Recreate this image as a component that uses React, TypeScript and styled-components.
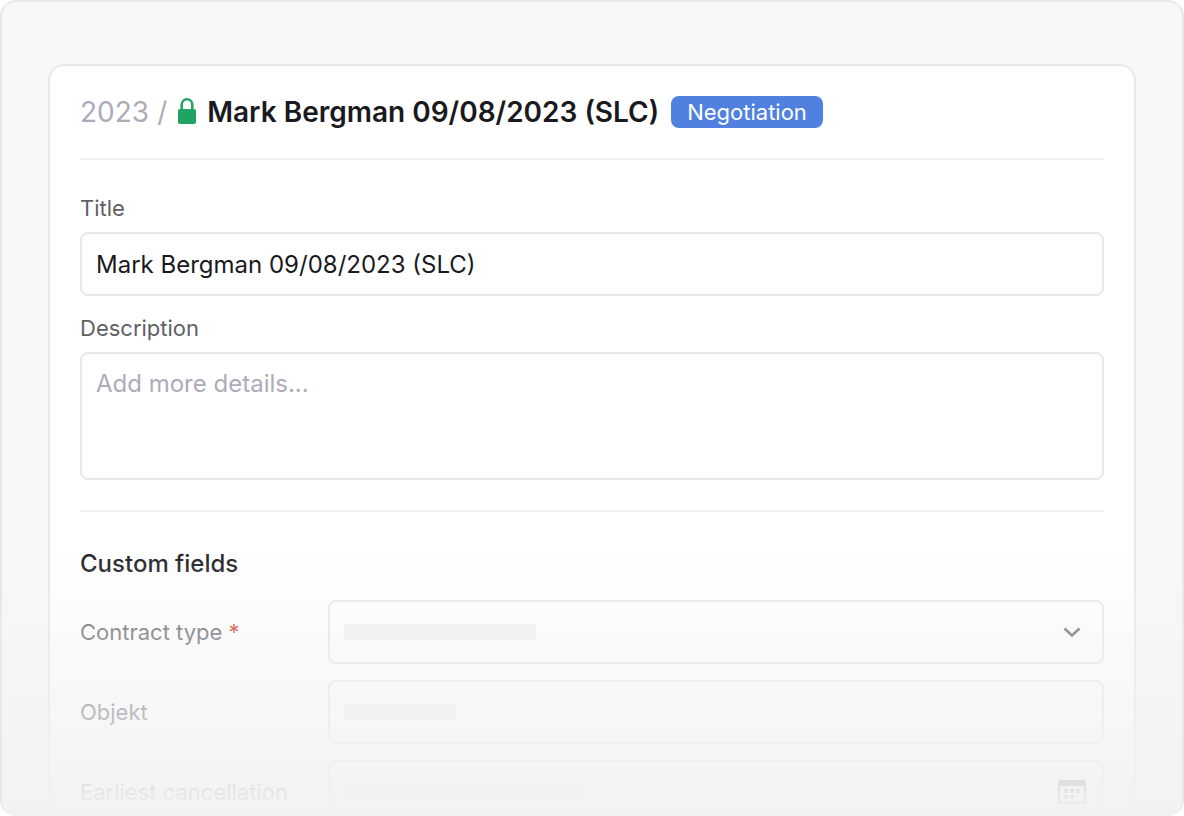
import React from "react";
import styled, { createGlobalStyle } from "styled-components";

const GlobalStyle = createGlobalStyle`
  *, *::before, *::after { box-sizing: border-box; }
  body {
    margin: 0;
    background: #ffffff;
    font-family: Inter, "Liberation Sans", sans-serif;
  }
`;

const Panel = styled.main`
  position: relative;
  display: flex;
  height: 100vh;
  padding: 62px 46px 12px;
  overflow: hidden;
  background: #f7f8fa;
  border: 2px solid #e8e8ea;
  border-bottom: 0;
  border-radius: 16px;
`;

const Card = styled.form`
  flex: 1;
  min-width: 0;
  padding: 0 30px;
  overflow: hidden;
  background: #ffffff;
  border: 2px solid #e8e8ea;
  border-bottom: 0;
  border-radius: 16px 16px 0 0;
`;

const Fade = styled.div`
  position: absolute;
  inset: auto -2px 0;
  height: 280px;
  pointer-events: none;
  background: linear-gradient(rgba(242, 242, 244, 0), #f2f2f4);
`;

const Header = styled.header`
  display: flex;
  align-items: center;
  height: 94px;
  border-bottom: 2px solid #f2f2f4;
  font-size: 28px;
  line-height: 40px;
  white-space: nowrap;
`;

const Crumb = styled.a`
  color: #adabba;
  text-decoration: none;
`;

const Slash = styled.span`
  margin: 0 10px 0 8px;
  color: #adabba;
`;

const PageTitle = styled.h1`
  margin: 0 12px 0 10px;
  color: #1a1a1e;
  font-size: 28px;
  font-weight: 600;
`;

const Badge = styled.span`
  padding: 0 16px;
  color: #ffffff;
  background: #5081e0;
  border-radius: 8px;
  font-size: 22px;
  line-height: 32px;
`;

const Section = styled.section`
  display: flex;
  flex-direction: column;
  padding: 32px 0 30px;
  border-bottom: 2px solid #f2f2f4;
`;

const CustomSection = styled.section`
  display: flex;
  flex-direction: column;
  gap: 16px;
  padding: 32px 0 0;
`;

const Label = styled.label`
  color: #5f5f66;
  font-size: 22px;
  line-height: 32px;
`;

const Required = styled.span`
  color: #c9301c;
`;

const fieldStyle = `
  display: block;
  width: 100%;
  margin: 0;
  color: #1a1a1e;
  background: transparent;
  border: 2px solid #e8e8ea;
  border-radius: 8px;
  outline: none;
  font-family: inherit;
  font-size: 24px;
`;

const TextInput = styled.input`
  ${fieldStyle}
  height: 64px;
  padding: 0 14px;
`;

const TitleInput = styled(TextInput)`
  margin: 8px 0 16px;
`;

const TextArea = styled.textarea`
  ${fieldStyle}
  height: 128px;
  margin-top: 8px;
  padding: 14px;
  line-height: 32px;
  resize: none;
  &::placeholder { color: #adabba; opacity: 1; }
`;

const Select = styled.select`
  ${fieldStyle}
  height: 64px;
  padding: 0 14px;
  appearance: none;
`;

const SectionTitle = styled.h2`
  margin: 0;
  color: #1a1a1e;
  font-size: 24px;
  font-weight: 500;
  line-height: 40px;
`;

const Row = styled.div`
  display: grid;
  grid-template-columns: 232px 1fr;
  column-gap: 16px;
  align-items: center;
`;

const Control = styled.div`
  position: relative;
`;

const Skeleton = styled.span<{ $width: number }>`
  position: absolute;
  top: 24px;
  left: 16px;
  width: ${(p) => p.$width}px;
  height: 16px;
  background: #f2f2f4;
  border-radius: 4px;
  pointer-events: none;
`;

const ControlIcon = styled.svg`
  position: absolute;
  top: 16px;
  right: 16px;
  width: 32px;
  height: 32px;
  pointer-events: none;
`;

const LockIcon = () => (
  <svg width="20" height="28" viewBox="0 0 20 28" aria-hidden="true">
    <path d="M4.700 12V6.600a5.300 5.300 0 0 1 10.600 0V12" fill="none" stroke="#20a464" strokeWidth="2.600" />
    <rect x="1" y="11" width="18" height="15" rx="2" fill="#20a464" />
  </svg>
);

const Chevron = () => (
  <ControlIcon viewBox="0 0 32 32" aria-hidden="true">
    <path d="M8.500 12.500 16 19.500l7.500-7" fill="none" stroke="#5f5f66" strokeWidth="2.400" />
  </ControlIcon>
);

const CalendarIcon = () => (
  <ControlIcon viewBox="0 0 32 32" aria-hidden="true">
    <path
      fill="#5f5f66"
      fillRule="evenodd"
      d="M4 4h24a2 2 0 0 1 2 2v20a2 2 0 0 1-2 2H4a2 2 0 0 1-2-2V6a2 2 0 0 1 2-2Zm1 6a1 1 0 0 0-1 1v14a1 1 0 0 0 1 1h22a1 1 0 0 0 1-1V11a1 1 0 0 0-1-1Z"
    />
    <path fill="#5f5f66" d="M8 13h4v4H8zM14 13h4v4h-4zM20 13h4v4h-4zM8 19h4v4H8zM14 19h4v4h-4z" />
  </ControlIcon>
);

export default function App() {
  return (
    <>
      <GlobalStyle />
      <Panel>
        <Card>
          <Header>
            <Crumb href="#2023">2023</Crumb>
            <Slash>/</Slash>
            <LockIcon />
            <PageTitle>Mark Bergman 09/08/2023 (SLC)</PageTitle>
            <Badge>Negotiation</Badge>
          </Header>
          <Section>
            <Label htmlFor="title">Title</Label>
            <TitleInput id="title" type="text" defaultValue="Mark Bergman 09/08/2023 (SLC)" />
            <Label htmlFor="description">Description</Label>
            <TextArea id="description" placeholder="Add more details..." />
          </Section>
          <CustomSection>
            <SectionTitle>Custom fields</SectionTitle>
            <Row>
              <Label htmlFor="contract-type">
                Contract type <Required>*</Required>
              </Label>
              <Control>
                <Select id="contract-type" />
                <Skeleton $width={192} />
                <Chevron />
              </Control>
            </Row>
            <Row>
              <Label htmlFor="objekt">Objekt</Label>
              <Control>
                <TextInput id="objekt" type="text" />
                <Skeleton $width={112} />
              </Control>
            </Row>
            <Row>
              <Label htmlFor="cancellation">Earliest cancellation</Label>
              <Control>
                <TextInput id="cancellation" type="text" />
                <Skeleton $width={240} />
                <CalendarIcon />
              </Control>
            </Row>
          </CustomSection>
        </Card>
        <Fade />
      </Panel>
    </>
  );
}
